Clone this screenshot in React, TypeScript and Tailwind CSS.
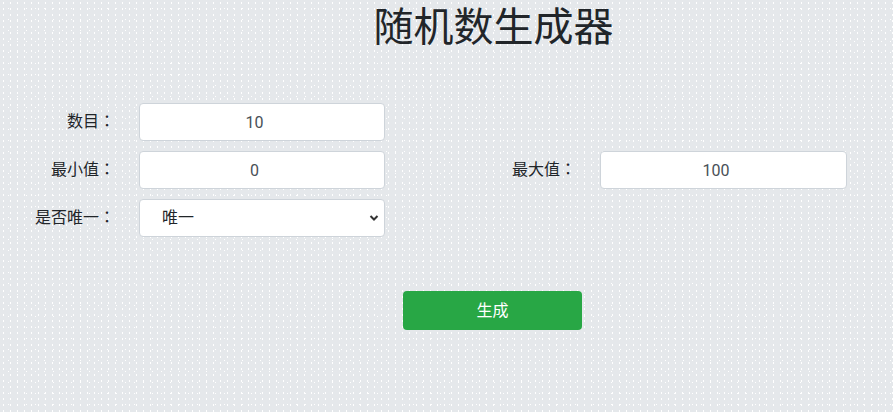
import React from "react";

const font = { fontFamily: 'Roboto, "Noto Sans CJK SC", sans-serif' };

function Label({ text, w }: { text: string; w: string }) {
  return (
    <div className={`${w} h-[38px] shrink-0 overflow-visible text-right text-[16px] leading-[38px] text-[#212529]`}>
      {text}
      <span className="leading-[16px]" style={{ fontFamily: '"Noto Sans CJK JP", sans-serif' }}>：</span>
    </div>
  );
}

function NumInput({ value, w }: { value: string; w: string }) {
  return (
    <input
      type="number"
      defaultValue={value}
      className={`${w} ml-[24px] h-[38px] shrink-0 rounded-[4px] border border-[#ced4da] bg-white px-[12px] text-center text-[16px] text-[#495057] outline-none`}
    />
  );
}

export default function App() {
  return (
    <div
      className="min-h-screen w-full bg-[#e5e8eb] bg-[image:radial-gradient(circle,#ffffff_0.6px,transparent_0.9px),radial-gradient(circle,#ffffff_0.6px,transparent_0.9px)] bg-[length:7px_6px,9px_11px] bg-[position:0_0,4px_3px]"
      style={font}
    >
      <div className="h-[412px] w-[893px]">
        <h1 className="pl-[94px] pt-[4px] text-center text-[40px] font-normal leading-[48px] text-[#212529]">
          随机数生成器
        </h1>
        <div className="mt-[51px] flex flex-col gap-[10px]">
          <div className="flex h-[38px] items-center">
            <Label text="数目" w="w-[115px]" />
            <NumInput value="10" w="w-[246px]" />
          </div>
          <div className="flex h-[38px] items-center">
            <Label text="最小值" w="w-[115px]" />
            <NumInput value="0" w="w-[246px]" />
            <Label text="最大值" w="w-[191px]" />
            <NumInput value="100" w="w-[247px]" />
          </div>
          <div className="flex h-[38px] items-center">
            <Label text="是否唯一" w="w-[115px]" />
            <div className="relative ml-[24px] h-[38px] w-[246px] shrink-0 rounded-[4px] border border-[#ced4da] bg-white">
              <select
                defaultValue="1"
                className="h-full w-full appearance-none bg-transparent pl-[22px] text-[16px] text-[#212529] outline-none"
              >
                <option value="1">唯一</option>
                <option value="0">不唯一</option>
              </select>
              <svg
                className="pointer-events-none absolute right-[5px] top-[14px]"
                width="10"
                height="8"
                viewBox="0 0 10 8"
              >
                <path d="M1.5 2 L5 5.5 L8.5 2" fill="none" stroke="#333" strokeWidth="2" />
              </svg>
            </div>
          </div>
        </div>
        <div className="mt-[54px] flex justify-center pl-[92px]">
          <button className="h-[39px] w-[179px] rounded-[4px] bg-[#28a745] text-[16px] text-white">
            生成
          </button>
        </div>
      </div>
    </div>
  );
}
